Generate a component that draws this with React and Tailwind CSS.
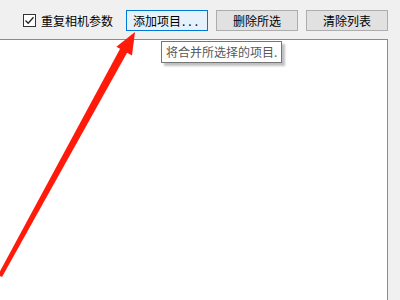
import React from 'react';

const font = { fontFamily: '"Noto Sans CJK SC", "Liberation Sans", sans-serif' };

function CheckBox() {
  return (
    <div className="w-[13px] h-[13px] border border-[#333333] bg-white flex items-center justify-center">
      <svg width="11" height="11" viewBox="0 0 11 11">
        <path d="M1.5 5.5 L4.2 8.2 L9.5 2.3" fill="none" stroke="#222222" strokeWidth="1.3" />
      </svg>
    </div>
  );
}

function Button({ children, active }) {
  return (
    <div
      className={
        'w-[82px] h-[21px] flex items-center justify-center text-[12px] text-black border ' +
        (active ? 'bg-[#e5f1fb] border-[#0078d7]' : 'bg-[#e1e1e1] border-[#adadad]')
      }
    >
      {children}
    </div>
  );
}

export default function App() {
  return (
    <div className="relative w-[400px] h-[300px] overflow-hidden bg-[#f0f0f0] flex flex-col" style={font}>
      <div className="h-[39px] flex items-center pl-[23px] pt-[2px]">
        <div className="flex items-center gap-[5px]">
          <CheckBox />
          <span className="text-[12px] text-black leading-none">重复相机参数</span>
        </div>
        <div className="flex items-center gap-[8px] ml-[13px]">
          <Button active>
            <span>添加项目</span>
            <span className="tracking-[3px] ml-[1px]">...</span>
          </Button>
          <Button>删除所选</Button>
          <Button>清除列表</Button>
        </div>
      </div>

      <div className="flex-1 w-[388px] bg-white border-t border-r border-[#8c8c8c]" />

      <div className="absolute left-[161px] top-[41px] h-[22px] px-[4px] flex items-center bg-white border border-[#767676] text-[12px] text-[#575757] shadow-[3px_3px_2px_rgba(0,0,0,0.25)]">
        将合并所选择的项目.
      </div>

      <svg className="absolute inset-0 pointer-events-none" width="400" height="300" viewBox="0 0 400 300">
        <polygon points="135,32 132,55.6 116.4,46.8" fill="#ff1a0a" />
        <polygon points="127.5,52 120.5,48 -2,275 2,277" fill="#ff1a0a" />
      </svg>
    </div>
  );
}
